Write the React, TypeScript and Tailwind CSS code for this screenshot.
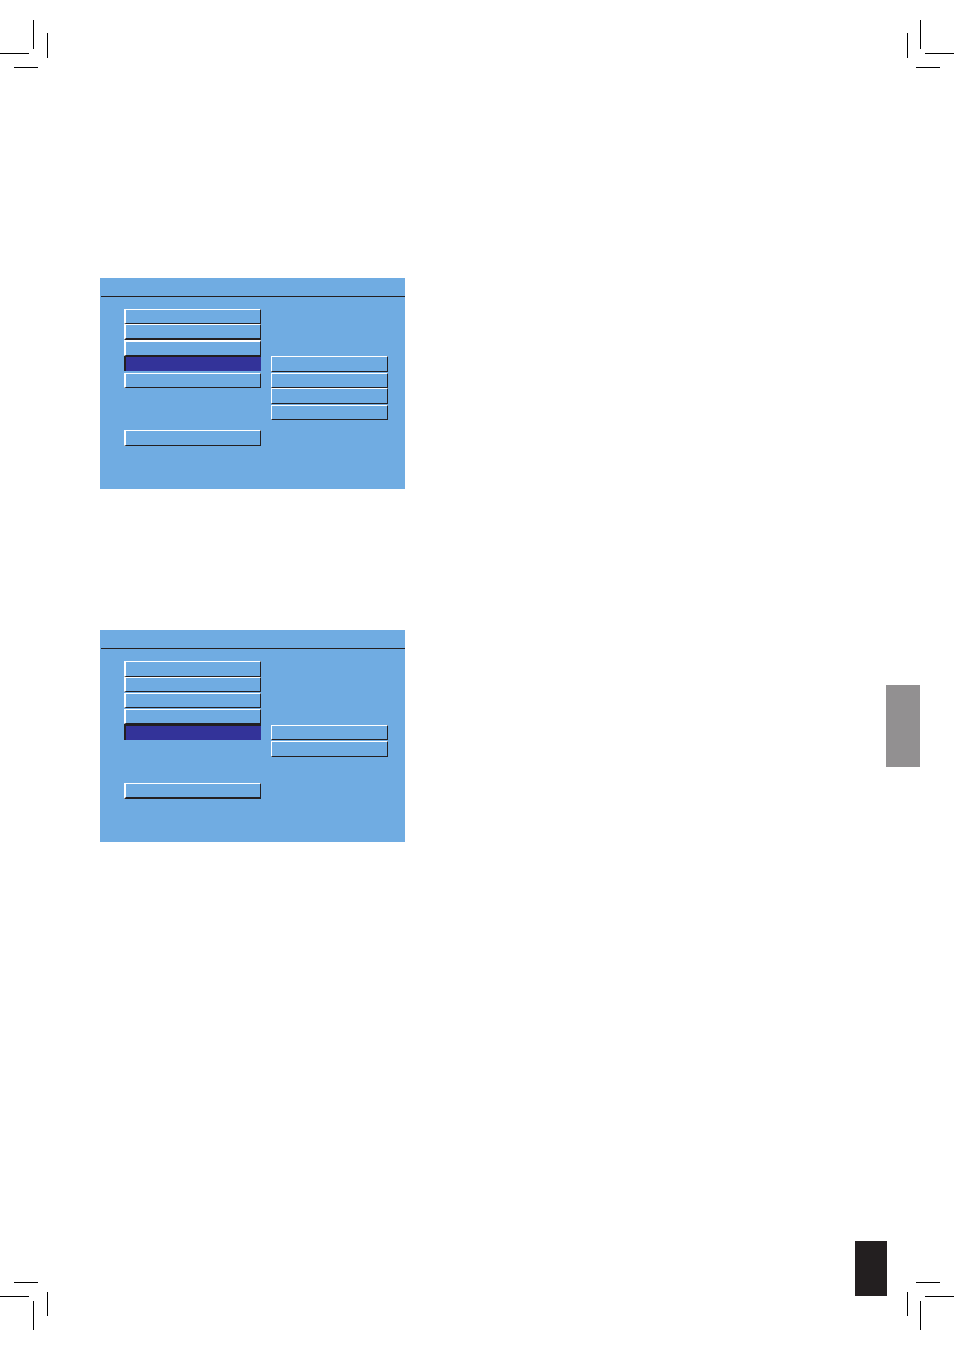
import clsx from "clsx";

interface MenuItem {
    id: string;
    label: string;
    className: string;
    active?: boolean;
}

interface MenuScreenProps {
    title: string;
    items: MenuItem[];
    options: MenuItem[];
    optionsClassName: string;
}

const setupItems: MenuItem[] = [
    { id: "1", label: "Menu item 1", className: "h-[15px] border-b" },
    { id: "2", label: "Menu item 2", className: "h-4 border-b-2" },
    { id: "3", label: "Menu item 3", className: "h-4 border-t-2 border-b" },
    { id: "4", label: "Menu item 4", className: "h-[15px] border-t", active: true },
    { id: "5", label: "Menu item 5", className: "mt-0.5 h-[15px] border-b" },
    { id: "exit", label: "Exit", className: "mt-[42px] h-4 border-b" },
];

const setupOptions: MenuItem[] = [
    { id: "a", label: "Option 1", className: "h-4" },
    { id: "b", label: "Option 2", className: "mt-px h-[15px]" },
    { id: "c", label: "Option 3", className: "h-4" },
    { id: "d", label: "Option 4", className: "mt-px h-[15px]" },
];

const featureItems: MenuItem[] = [
    { id: "1", label: "Menu item 1", className: "h-4 border-b" },
    { id: "2", label: "Menu item 2", className: "h-[15px] border-b" },
    { id: "3", label: "Menu item 3", className: "mt-px h-[15px] border-b" },
    { id: "4", label: "Menu item 4", className: "mt-px h-[15px] border-b" },
    { id: "5", label: "Menu item 5", className: "h-4 border-t-2", active: true },
    { id: "exit", label: "Exit", className: "mt-[43px] h-4 border-b-2" },
];

const featureOptions: MenuItem[] = [
    { id: "a", label: "Option 1", className: "h-[15px]" },
    { id: "b", label: "Option 2", className: "mt-px h-4" },
];

function MenuScreen({ title, items, options, optionsClassName }: MenuScreenProps) {
    return (
        <section aria-label={title} className="w-full max-w-[305px] bg-[#70ace2] pb-[43px]">
            <div className="ml-px h-[19px] border-b border-[#231f20]" />
            <div className="flex items-start gap-2.5 pt-3 pr-[17px] pl-6">
                <div className="flex w-[137px] flex-col">
                    {items.map((item) => (
                        <button
                            key={item.id}
                            type="button"
                            aria-label={item.label}
                            className={clsx(
                                "block w-full shrink-0 border-l-2",
                                item.active
                                    ? "border-[#231f20] bg-[#333399]"
                                    : "border-t border-r border-t-white border-r-[#231f20] border-b-[#231f20] border-l-white",
                                item.className
                            )}
                        />
                    ))}
                </div>
                <div className={clsx("flex flex-1 flex-col", optionsClassName)}>
                    {options.map((option) => (
                        <button
                            key={option.id}
                            type="button"
                            aria-label={option.label}
                            className={clsx(
                                "block w-full shrink-0 border border-t-white border-r-[#231f20] border-b-[#231f20] border-l-white",
                                option.className
                            )}
                        />
                    ))}
                </div>
            </div>
        </section>
    );
}

// Trim and bleed marks for one corner of the sheet
function CropMarks({ d }: { d: string }) {
    return (
        <svg width="67" height="68" viewBox="0 0 67 68" className="block shrink-0" aria-hidden="true">
            <path d={d} fill="none" stroke="#000" strokeWidth="1" shapeRendering="crispEdges" />
        </svg>
    );
}

export default function App() {
    return (
        <div className="flex min-h-screen flex-col bg-white">
            <header className="flex justify-between">
                <CropMarks d="M33.5 20V49M47.5 33V58M0 53.5H29M14 67.5H38" />
                <CropMarks d="M33.5 20V49M20.5 33V58M38 53.5H67M29 67.5H53" />
            </header>

            <main className="flex flex-1 items-start justify-between pr-[34px] pl-[100px]">
                <div className="flex flex-1 flex-col gap-[141px] pt-[210px]">
                    <MenuScreen
                        title="Setup menu"
                        items={setupItems}
                        options={setupOptions}
                        optionsClassName="pt-[47px]"
                    />
                    <MenuScreen
                        title="Feature menu"
                        items={featureItems}
                        options={featureOptions}
                        optionsClassName="pt-16"
                    />
                </div>
                <div className="mt-[617px] h-[82px] w-[34px] bg-[#929091]" />
            </main>

            <footer className="flex items-end">
                <CropMarks d="M14 0.5H38M0 14.5H29M47.5 10V34M33.5 19V48" />
                <div className="ml-auto h-[55px] w-8 self-start bg-[#231f20]" />
                <div className="pt-[41px]">
                    <CropMarks d="M29 0.5H53M38 14.5H67M20.5 10V34M33.5 19V48" />
                </div>
            </footer>
        </div>
    );
}
